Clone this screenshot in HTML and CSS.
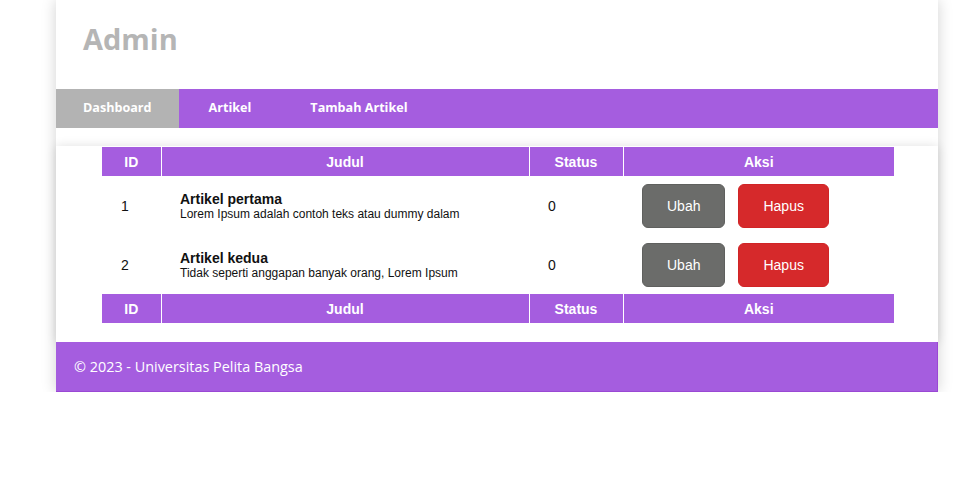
FILE: index.html
```html
<!DOCTYPE html>
<html lang="id">
<head>
<meta charset="utf-8">
<title>Admin</title>
<link rel="stylesheet" href="styles.css">
</head>
<body>
<div class="container">
  <header class="site-header">
    <h1 class="site-title">Admin</h1>
  </header>
  <nav class="main-nav">
    <a class="nav-link active" href="#">Dashboard</a>
    <a class="nav-link" href="#">Artikel</a>
    <a class="nav-link" href="#">Tambah Artikel</a>
  </nav>
  <section class="content">
    <table class="data-table">
      <thead>
        <tr>
          <th class="col-id">ID</th>
          <th class="col-judul">Judul</th>
          <th class="col-status">Status</th>
          <th class="col-aksi">Aksi</th>
        </tr>
      </thead>
      <tbody>
        <tr class="row-first">
          <td>1</td>
          <td>
            <div class="art-title">Artikel pertama</div>
            <div class="art-desc">Lorem Ipsum adalah contoh teks atau dummy dalam</div>
          </td>
          <td>0</td>
          <td>
            <div class="actions">
              <a class="btn btn-ubah" href="#">Ubah</a>
              <a class="btn btn-hapus" href="#">Hapus</a>
            </div>
          </td>
        </tr>
        <tr class="row-second">
          <td>2</td>
          <td>
            <div class="art-title">Artikel kedua</div>
            <div class="art-desc">Tidak seperti anggapan banyak orang, Lorem Ipsum</div>
          </td>
          <td>0</td>
          <td>
            <div class="actions">
              <a class="btn btn-ubah" href="#">Ubah</a>
              <a class="btn btn-hapus" href="#">Hapus</a>
            </div>
          </td>
        </tr>
      </tbody>
      <tfoot>
        <tr>
          <th>ID</th>
          <th>Judul</th>
          <th>Status</th>
          <th>Aksi</th>
        </tr>
      </tfoot>
    </table>
  </section>
  <footer class="site-footer">
    <p>&copy; 2023 - Universitas Pelita Bangsa</p>
  </footer>
</div>
</body>
</html>
```

FILE: styles.css
```css
* { box-sizing: border-box; }

body {
  margin: 0;
  background: #ffffff;
  font-family: "Liberation Sans", Arial, sans-serif;
  color: #111;
}

.container {
  width: 882px;
  margin: 0 0 0 56px;
  background: #ffffff;
  box-shadow: 0 0 14px rgba(0, 0, 0, 0.18);
}

.site-header {
  height: 89px;
  padding: 20px 27px 0;
}

.site-title {
  margin: 0;
  font-family: "Open Sans", sans-serif;
  font-weight: 700;
  font-size: 29px;
  line-height: 38px;
  color: #b5b5b5;
}

.main-nav {
  display: flex;
  height: 39px;
  background: #a55ddf;
  margin-bottom: 18px;
}

.nav-link {
  display: flex;
  align-items: center;
  padding: 0 29px 3px 30px;
  font-family: "Open Sans", sans-serif;
  font-weight: 700;
  font-size: 12.6px;
  color: #ffffff;
  text-decoration: none;
}

.nav-link.active {
  background: #b3b3b3;
  padding-left: 27px;
  padding-right: 27px;
}

.content {
  background: #ffffff;
  padding: 1px 0 19px;
  box-shadow: 0 0 10px rgba(0, 0, 0, 0.12);
}

.data-table {
  width: 792px;
  margin: 0 0 0 46px;
  border-collapse: collapse;
  font-size: 14px;
}

.data-table th {
  background: #a55ddf;
  color: #ffffff;
  font-weight: 700;
  font-size: 14px;
  height: 29px;
  padding: 0 6px;
  text-align: center;
  border-left: 1px solid #ffffff;
}

.data-table th:first-child { border-left: none; }

.col-id { width: 59px; }
.col-judul { width: 368px; }
.col-status { width: 94px; }

.data-table td {
  padding: 0 18px 0 19px;
  vertical-align: middle;
  color: #111;
}

.row-first td { height: 60px; }
.row-second td { height: 58px; }

.art-title {
  font-weight: 700;
  font-size: 14px;
  line-height: 16px;
}

.art-desc {
  font-size: 12px;
  line-height: 14px;
}

.actions {
  display: flex;
  gap: 13px;
}

.btn {
  display: inline-block;
  padding: 13px 24px;
  font-size: 14px;
  line-height: 16px;
  color: #ffffff;
  text-decoration: none;
  border-radius: 6px;
  border: 1px solid transparent;
}

.btn-ubah {
  background: #6b6c6a;
  border-color: #5f605e;
}

.btn-hapus {
  background: #d6292b;
  border-color: #d02426;
}

.site-footer {
  background: #a55ddf;
  border-right: 1px solid #9a48d4;
  border-bottom: 1px solid #9a48d4;
  height: 50px;
  padding: 0 18px;
  display: flex;
  align-items: center;
}

.site-footer p {
  margin: 0;
  font-family: "Open Sans", sans-serif;
  font-size: 14.4px;
  color: #ffffff;
}
```
